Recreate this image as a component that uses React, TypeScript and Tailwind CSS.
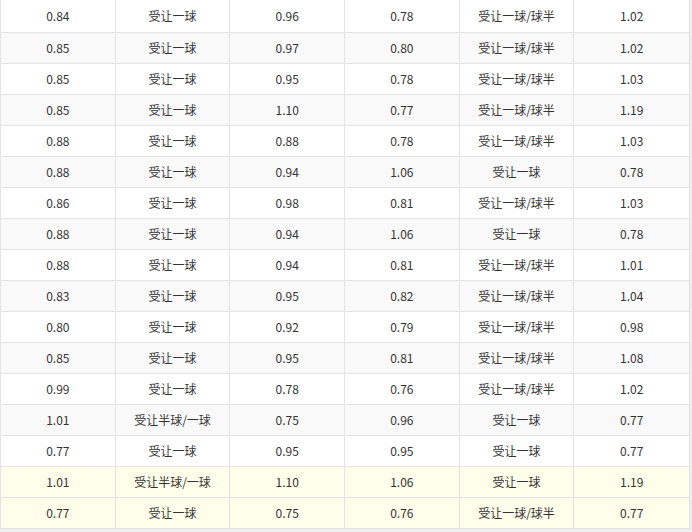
const rows: [string, string, string, string, string, string][] = [
  ["0.84", "受让一球", "0.96", "0.78", "受让一球/球半", "1.02"],
  ["0.85", "受让一球", "0.97", "0.80", "受让一球/球半", "1.02"],
  ["0.85", "受让一球", "0.95", "0.78", "受让一球/球半", "1.03"],
  ["0.85", "受让一球", "1.10", "0.77", "受让一球/球半", "1.19"],
  ["0.88", "受让一球", "0.88", "0.78", "受让一球/球半", "1.03"],
  ["0.88", "受让一球", "0.94", "1.06", "受让一球", "0.78"],
  ["0.86", "受让一球", "0.98", "0.81", "受让一球/球半", "1.03"],
  ["0.88", "受让一球", "0.94", "1.06", "受让一球", "0.78"],
  ["0.88", "受让一球", "0.94", "0.81", "受让一球/球半", "1.01"],
  ["0.83", "受让一球", "0.95", "0.82", "受让一球/球半", "1.04"],
  ["0.80", "受让一球", "0.92", "0.79", "受让一球/球半", "0.98"],
  ["0.85", "受让一球", "0.95", "0.81", "受让一球/球半", "1.08"],
  ["0.99", "受让一球", "0.78", "0.76", "受让一球/球半", "1.02"],
  ["1.01", "受让半球/一球", "0.75", "0.96", "受让一球", "0.77"],
  ["0.77", "受让一球", "0.95", "0.95", "受让一球", "0.77"],
  ["1.01", "受让半球/一球", "1.10", "1.06", "受让一球", "1.19"],
  ["0.77", "受让一球", "0.75", "0.76", "受让一球/球半", "0.77"],
];

function rowBg(i: number) {
  if (i >= 15) return "bg-[#fefeea]";
  return i % 2 === 1 ? "bg-[#f9f9f9]" : "bg-white";
}

export default function App() {
  return (
    <div
      className="w-[692px] h-[532px] overflow-hidden bg-[#eeeeee] text-[12px] text-[#333]"
      style={{ fontFamily: '"Noto Sans CJK SC", "Noto Sans", sans-serif' }}
    >
      <div className="w-[690px] bg-white border-l border-r border-[#e3e3e3]">
        {rows.map((r, i) => (
          <div
            key={i}
            className={`grid grid-cols-6 border-b border-[#e3e3e3] ${rowBg(i)} ${i === 0 ? "h-[33px]" : "h-[31px]"}`}
          >
            {r.map((c, j) => (
              <div
                key={j}
                className={`flex items-center justify-center ${j < 5 ? "border-r border-[#e3e3e3]" : ""}`}
              >
                {c}
              </div>
            ))}
          </div>
        ))}
      </div>
    </div>
  );
}
